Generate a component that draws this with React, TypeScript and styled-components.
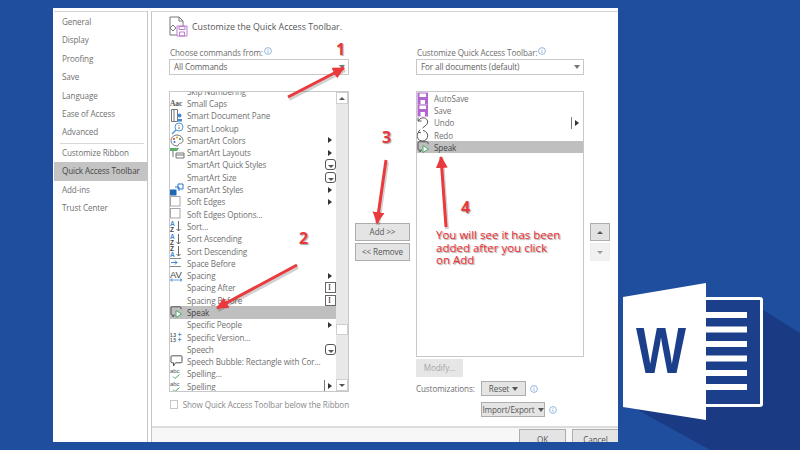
import React from 'react';
import styled, { createGlobalStyle } from 'styled-components';

const GlobalStyle = createGlobalStyle`
  html, body {
    margin: 0;
    padding: 0;
    overflow: hidden;
  }
  * {
    box-sizing: border-box;
  }
`;

type IconName =
  | 'caps' | 'docPane' | 'lookup' | 'palette' | 'layouts' | 'styles' | 'box'
  | 'az' | 'za' | 'spaceBefore' | 'av' | 'speak' | 'version' | 'bubble'
  | 'spell' | 'save' | 'undo' | 'redo';

type Trail = 'arrow' | 'split' | 'gallery' | 'field';

interface Command {
  label: string;
  icon?: IconName;
  trail?: Trail;
  selected?: boolean;
}

const NAV_TOP = ['General', 'Display', 'Proofing', 'Save', 'Language', 'Ease of Access', 'Advanced'];
const NAV_BOTTOM = ['Customize Ribbon', 'Quick Access Toolbar', 'Add-ins', 'Trust Center'];

const COMMANDS: Command[] = [
  { label: 'Skip Numbering' },
  { label: 'Small Caps', icon: 'caps' },
  { label: 'Smart Document Pane', icon: 'docPane' },
  { label: 'Smart Lookup', icon: 'lookup' },
  { label: 'SmartArt Colors', icon: 'palette', trail: 'arrow' },
  { label: 'SmartArt Layouts', icon: 'layouts', trail: 'arrow' },
  { label: 'SmartArt Quick Styles', trail: 'gallery' },
  { label: 'SmartArt Size', trail: 'gallery' },
  { label: 'SmartArt Styles', icon: 'styles', trail: 'arrow' },
  { label: 'Soft Edges', icon: 'box', trail: 'arrow' },
  { label: 'Soft Edges Options...', icon: 'box' },
  { label: 'Sort...', icon: 'az' },
  { label: 'Sort Ascending', icon: 'az' },
  { label: 'Sort Descending', icon: 'za' },
  { label: 'Space Before', icon: 'spaceBefore' },
  { label: 'Spacing', icon: 'av', trail: 'arrow' },
  { label: 'Spacing After', trail: 'field' },
  { label: 'Spacing Before', trail: 'field' },
  { label: 'Speak', icon: 'speak', selected: true },
  { label: 'Specific People', trail: 'arrow' },
  { label: 'Specific Version...', icon: 'version' },
  { label: 'Speech', trail: 'gallery' },
  { label: 'Speech Bubble: Rectangle with Cor...', icon: 'bubble' },
  { label: 'Spelling...', icon: 'spell' },
  { label: 'Spelling', icon: 'spell', trail: 'split' },
];

const TOOLBAR: Command[] = [
  { label: 'AutoSave', icon: 'save' },
  { label: 'Save', icon: 'save' },
  { label: 'Undo', icon: 'undo', trail: 'split' },
  { label: 'Redo', icon: 'redo' },
  { label: 'Speak', icon: 'speak', selected: true },
];

// annotation arrows: tail x, tail y, head x, head y
const ARROWS = [
  [288, 97, 344, 68],
  [297, 265, 217, 308],
  [386, 160, 377, 223],
  [446, 227, 441, 157],
];

function RowIcon({ name }: { name: IconName }) {
  switch (name) {
    case 'caps':
      return (
        <svg width="14" height="10" viewBox="0 0 14 10">
          <text x="0" y="8" fontFamily="Liberation Serif, serif" fontSize="7.500" fontWeight="700" fill="#555">Aac</text>
        </svg>
      );
    case 'docPane':
      return (
        <svg width="14" height="13" viewBox="0 0 14 13" fill="none">
          <path d="M1.500 .5h6v12h-6zM4 .5v12" stroke="#777" />
          <circle cx="9.500" cy="6.500" r="2" fill="#3f8ad2" />
          <path d="M8 10h4v2.500H8z" fill="#3f8ad2" />
        </svg>
      );
    case 'lookup':
      return (
        <svg width="16" height="13" viewBox="0 0 16 13" fill="none">
          <circle cx="9" cy="5" r="4" stroke="#4f97d8" />
          <path d="M6 8l-4 4" stroke="#4f97d8" strokeWidth="1.200" />
          <path d="M9 3v.8M9 5v2.200" stroke="#777" />
        </svg>
      );
    case 'palette':
      return (
        <svg width="14" height="13" viewBox="0 0 14 13" fill="none">
          <path d="M7 1a6 5.500 0 1 0 0 11c2 0 1-2 2.500-2.500S13 9 13 6.500A6 5.500 0 0 0 7 1z" stroke="#777" />
          <circle cx="4" cy="5" r="1" fill="#c0392b" />
          <circle cx="7" cy="3.500" r="1" fill="#d89a2a" />
          <circle cx="10" cy="5" r="1" fill="#3a8f4a" />
          <circle cx="4.500" cy="8" r="1" fill="#2a78c8" />
        </svg>
      );
    case 'layouts':
      return (
        <svg width="15" height="12" viewBox="0 0 15 12" fill="none">
          <path d="M0 1h9L7 4H0z" fill="#5cae6c" />
          <path d="M3 4v6" stroke="#777" />
          <path d="M6 6h8v5H6zM6 8h8" stroke="#777" />
        </svg>
      );
    case 'styles':
      return (
        <svg width="14" height="13" viewBox="0 0 14 13" fill="none">
          <path d="M8 1h5v5H8zM5 4h4v4" stroke="#2a78c8" />
          <path d="M0 6.500h6.500V12.500H0z" fill="#1f66b5" />
        </svg>
      );
    case 'box':
      return (
        <svg width="12" height="12" viewBox="0 0 12 12">
          <rect x=".5" y=".5" width="9.500" height="9.500" fill="#fff" stroke="#a8a8a8" />
        </svg>
      );
    case 'az':
    case 'za':
      return (
        <svg width="14" height="12" viewBox="0 0 14 12" fill="none">
          <text x="0" y="5.500" fontFamily="Liberation Sans, sans-serif" fontSize="6.500" fontWeight="700" fill={name === 'az' ? '#3f8ad2' : '#444'}>{name === 'az' ? 'A' : 'Z'}</text>
          <text x="0" y="11.500" fontFamily="Liberation Sans, sans-serif" fontSize="6.500" fontWeight="700" fill={name === 'az' ? '#444' : '#3f8ad2'}>{name === 'az' ? 'Z' : 'A'}</text>
          <path d="M8.500 1v10M6.500 9l2 2 2-2" stroke="#666" />
        </svg>
      );
    case 'spaceBefore':
      return (
        <svg width="14" height="12" viewBox="0 0 14 12" fill="none">
          <path d="M0 1.500h11M0 9.500h11" stroke="#888" />
          <path d="M1 5.500h6M5 3.500l2 2-2 2" stroke="#3f8ad2" />
        </svg>
      );
    case 'av':
      return (
        <svg width="14" height="13" viewBox="0 0 14 13" fill="none">
          <text x="0" y="8.500" fontFamily="Liberation Sans, sans-serif" fontSize="9.500" fill="#444">AV</text>
          <path d="M.5 11h11.500M2.500 9.500L.5 11l2 1.500M10 9.500l2 1.500-2 1.500" stroke="#3f8ad2" strokeWidth=".8" />
        </svg>
      );
    case 'speak':
      return (
        <svg width="15" height="13" viewBox="0 0 15 13" fill="none">
          <path d="M2 .8h8a1 1 0 0 1 1 1v1.500M5 9H4.300L3 11V9H2a1 1 0 0 1-1-1V1.800a1 1 0 0 1 1-1" stroke="#555" />
          <path d="M6 4.500l5.500 3.500L6 11.500z" fill="#fff" stroke="#49a865" />
        </svg>
      );
    case 'version':
      return (
        <svg width="14" height="10" viewBox="0 0 14 10">
          <text x="0" y="4.500" fontFamily="Liberation Sans, sans-serif" fontSize="4.500" fontWeight="700" fill="#555">1.3</text>
          <text x="0" y="9.500" fontFamily="Liberation Sans, sans-serif" fontSize="4.500" fontWeight="700" fill="#555">1.5</text>
          <path d="M8 2.500h3.500M9.700 .7v3.600M8 7.500h3.500M9.700 5.700v3.600" stroke="#3f8ad2" strokeWidth=".8" />
        </svg>
      );
    case 'bubble':
      return (
        <svg width="13" height="13" viewBox="0 0 13 13" fill="none">
          <path d="M2 .8h9a1 1 0 0 1 1 1v5a1 1 0 0 1-1 1H5.500L3.500 11V7.800H2a1 1 0 0 1-1-1V1.800a1 1 0 0 1 1-1z" stroke="#555" />
        </svg>
      );
    case 'spell':
      return (
        <svg width="14" height="13" viewBox="0 0 14 13" fill="none">
          <text x="0" y="5.500" fontFamily="Liberation Sans, sans-serif" fontSize="6" fill="#555">abc</text>
          <path d="M3 9.500l2 2L9.500 7.500" stroke="#49a865" />
        </svg>
      );
    case 'save':
      return (
        <svg width="12" height="13" viewBox="0 0 12 13">
          <path d="M.5 .5h10.500v12H.5z" fill="#b366cf" />
          <path d="M2.500 1.500h6.500v3.500H2.500zM3.500 8h4.500v4.500H3.500z" fill="#fff" />
        </svg>
      );
    case 'undo':
      return (
        <svg width="12" height="13" viewBox="0 0 12 13" fill="none">
          <path d="M1 1.500v3.500h3.500" stroke="#555" />
          <path d="M1.300 5C3 2.300 5 1.500 7.500 2c3.500 1 4 4.800 1.800 7L5.500 12" stroke="#555" />
        </svg>
      );
    case 'redo':
      return (
        <svg width="12" height="13" viewBox="0 0 12 13" fill="none">
          <path d="M3 .8L1.200 3.200l2.800 .6" stroke="#555" />
          <path d="M1.500 3.200A5.300 5.300 0 1 0 6 1.500" stroke="#555" />
        </svg>
      );
    default:
      return null;
  }
}

function InfoMark() {
  return (
    <InfoSvg width="8" height="8" viewBox="0 0 8 8" fill="none">
      <circle cx="4" cy="4" r="3.400" stroke="#7aa7d8" strokeWidth=".8" />
      <path d="M4 3.300v2.700M4 1.900v.7" stroke="#7aa7d8" strokeWidth=".8" />
    </InfoSvg>
  );
}

function CommandRow({ item }: { item: Command }) {
  return (
    <Row $selected={item.selected}>
      <IconSlot>{item.icon && <RowIcon name={item.icon} />}</IconSlot>
      <RowLabel>{item.label}</RowLabel>
      {item.trail === 'arrow' && <TrailArrow />}
      {item.trail === 'split' && <SplitBar><TrailArrow /></SplitBar>}
      {item.trail === 'gallery' && <GalleryMark><DownTick /></GalleryMark>}
      {item.trail === 'field' && <FieldMark>I</FieldMark>}
    </Row>
  );
}

function WordLogo() {
  return (
    <LogoSvg width="177" height="167" viewBox="623 283 177 167">
      <path d="M763 310L800 333V450H710L638 410z" fill="#1a3b84" />
      <rect x="700" y="297" width="63" height="110" rx="3" fill="#fff" />
      <rect x="706" y="300" width="54" height="104" fill="#1b3f8b" />
      {[312, 326.500, 341, 355.500, 370, 384].map((y) => (
        <rect key={y} x="706" y={y} width="41" height="6" fill="#fff" />
      ))}
      <path d="M623 297L706 283V420L623 407z" fill="#fff" />
      <text
        x="661"
        y="373"
        textAnchor="middle"
        fontFamily="Liberation Sans, sans-serif"
        fontSize="64"
        fontWeight="700"
        fill="#1b3f8b"
        textLength="50"
        lengthAdjust="spacingAndGlyphs"
      >
        W
      </text>
    </LogoSvg>
  );
}

function Annotations() {
  return (
    <ArrowLayer width="800" height="450" viewBox="0 0 800 450">
      <defs>
        <marker id="head" markerUnits="userSpaceOnUse" markerWidth="14" markerHeight="14" refX="11" refY="6" orient="auto">
          <path d="M0 0L12 6L0 12z" fill="#ea3a3d" />
        </marker>
      </defs>
      {ARROWS.map(([x1, y1, x2, y2]) => (
        <g key={`${x1}-${y1}`}>
          <line x1={x1 + 1} y1={y1 + 2} x2={x2 + 1} y2={y2 + 2} stroke="#000" strokeOpacity=".18" strokeWidth="4" />
          <line x1={x1} y1={y1} x2={x2} y2={y2} stroke="#ea3a3d" strokeWidth="3" markerEnd="url(#head)" />
        </g>
      ))}
    </ArrowLayer>
  );
}

export default function App() {
  return (
    <>
      <GlobalStyle />
      <Stage>
        <Dialog>
          <Nav>
            {NAV_TOP.map((name) => (
              <NavItem key={name}>{name}</NavItem>
            ))}
            <NavRule />
            {NAV_BOTTOM.map((name) => (
              <NavItem key={name} $active={name === 'Quick Access Toolbar'}>{name}</NavItem>
            ))}
          </Nav>
          <Panel>
            <Header>
              <svg width="19" height="21" viewBox="0 0 19 21" fill="none">
                <path d="M1 1h9l4 4v14H1z" fill="#fff" stroke="#777" />
                <path d="M10 1v4h4" stroke="#777" />
                <path d="M4 9l-3 3 3 3 3-3z" fill="#fff" stroke="#777" />
                <path d="M8 10h10v10H8z" fill="#fff" stroke="#bd7ccf" />
                <path d="M10 10.500h6v3h-6zM10.500 16h5v4h-5z" stroke="#bd7ccf" />
              </svg>
              <Title>Customize the Quick Access Toolbar.</Title>
            </Header>
            <Columns>
              <CommandsColumn>
                <FieldLabel>Choose commands from:<InfoMark /></FieldLabel>
                <Select>All Commands<Caret /></Select>
                <ListBox $height={301}>
                  <ScrollRows>
                    {COMMANDS.map((item, i) => (
                      <CommandRow key={`${item.label}-${i}`} item={item} />
                    ))}
                  </ScrollRows>
                  <ScrollTrack>
                    <ScrollButton><UpTick /></ScrollButton>
                    <ScrollThumb />
                    <ScrollButton><DownTick /></ScrollButton>
                  </ScrollTrack>
                </ListBox>
                <CheckLine>
                  <CheckBox />
                  Show Quick Access Toolbar below the Ribbon
                </CheckLine>
              </CommandsColumn>

              <MiddleColumn>
                <PlainButton>Add &gt;&gt;</PlainButton>
                <PlainButton>&lt;&lt; Remove</PlainButton>
              </MiddleColumn>

              <ToolbarColumn>
                <FieldLabel>Customize Quick Access Toolbar:<InfoMark /></FieldLabel>
                <Select>For all documents (default)<Caret /></Select>
                <ListBox $height={266}>
                  <ToolbarRows>
                    {TOOLBAR.map((item) => (
                      <CommandRow key={item.label + item.icon} item={item} />
                    ))}
                  </ToolbarRows>
                </ListBox>
                <ModifyButton>Modify...</ModifyButton>
                <CustomGrid>
                  <span>Customizations:</span>
                  <ButtonLine>
                    <MenuButton $width={45}>Reset<Caret /></MenuButton>
                    <InfoMark />
                  </ButtonLine>
                  <span />
                  <ButtonLine>
                    <MenuButton $width={64}>Import/Export<Caret /></MenuButton>
                    <InfoMark />
                  </ButtonLine>
                </CustomGrid>
              </ToolbarColumn>

              <SideColumn>
                <SideButton><UpTick /></SideButton>
                <SideButton $disabled><DownTick /></SideButton>
              </SideColumn>
            </Columns>
            <Footer>
              <FooterButton>OK</FooterButton>
              <FooterButton>Cancel</FooterButton>
            </Footer>
          </Panel>
        </Dialog>
        <WordLogo />
        <Annotations />
        <Num $x={336} $y={38}>1</Num>
        <Num $x={299} $y={227}>2</Num>
        <Num $x={382} $y={126}>3</Num>
        <Num $x={461} $y={196}>4</Num>
        <Note>You will see it has been<br />added after you click<br />on Add</Note>
      </Stage>
    </>
  );
}

const uiFont = `'Open Sans', 'Liberation Sans', sans-serif`;

const Stage = styled.div`
  position: relative;
  width: 800px;
  height: 450px;
  overflow: hidden;
  background: #1f4e9e;
  padding: 8px 0 0 53px;
  font-family: ${uiFont};
`;

const Dialog = styled.div`
  display: flex;
  width: 565px;
  height: 434px;
  overflow: hidden;
  background: #fff;
  padding-top: 3px;
  color: #6e6e6e;
  font-size: 8.100px;
  letter-spacing: -0.1px;
`;

const Nav = styled.nav`
  flex: none;
  width: 94px;
  margin-left: 1px;
  border-right: 1px solid #c6c6c6;
  border-top: 1px solid #d6d6d6;
  padding-top: 1px;
`;

const NavItem = styled.div<{ $active?: boolean }>`
  height: 18.400px;
  line-height: 18.400px;
  padding-left: 8px;
  margin-right: -1px;
  white-space: nowrap;
  background: ${({ $active }) => ($active ? '#c4c4c4' : 'transparent')};
  color: ${({ $active }) => ($active ? '#444' : '#707070')};
`;

const NavRule = styled.div`
  height: 1px;
  margin: 1px 3px 0 6px;
  background: #d8d8d8;
`;

const Panel = styled.main`
  flex: none;
  width: 467px;
  margin-left: 3px;
  border-left: 1px solid #c6c6c6;
  border-top: 1px solid #d6d6d6;
  display: flex;
  flex-direction: column;
`;

const Header = styled.header`
  height: 34px;
  padding: 4px 0 0 17px;
  display: flex;
  align-items: flex-start;
  gap: 4px;
`;

const Title = styled.h1`
  margin: 5px 0 0;
  font-size: 8.800px;
  line-height: 13px;
  font-weight: 400;
  letter-spacing: 0;
  color: #555;
  white-space: nowrap;
`;

const Columns = styled.div`
  display: flex;
  padding-left: 17px;
  height: 380px;
`;

const CommandsColumn = styled.section`
  width: 180px;
  display: flex;
  flex-direction: column;
`;

const ToolbarColumn = styled.section`
  width: 168px;
  margin-left: 6px;
  display: flex;
  flex-direction: column;
`;

const FieldLabel = styled.div`
  height: 13px;
  line-height: 13px;
  padding-left: 1px;
  white-space: nowrap;
`;

const InfoSvg = styled.svg`
  margin-left: 1px;
  vertical-align: 1px;
`;

const Select = styled.div`
  position: relative;
  height: 16px;
  line-height: 14px;
  padding-left: 4px;
  border: 1px solid #c8c8c8;
  color: #5e5e5e;
  margin-bottom: 16px;
`;

const Caret = styled.span`
  display: inline-block;
  width: 0;
  height: 0;
  border-left: 3px solid transparent;
  border-right: 3px solid transparent;
  border-top: 4px solid #555;
  ${Select} & {
    position: absolute;
    right: 3px;
    top: 5px;
    border-top-color: #777;
  }
`;

const ListBox = styled.div<{ $height: number }>`
  flex: none;
  height: ${({ $height }) => $height}px;
  display: flex;
  overflow: hidden;
  border: 1px solid #c8c8c8;
`;

const ScrollRows = styled.div`
  flex: 1;
  min-width: 0;
  margin-top: -7px;
`;

const ToolbarRows = styled.div`
  flex: 1;
  min-width: 0;
`;

const Row = styled.div<{ $selected?: boolean }>`
  display: flex;
  align-items: center;
  height: 12.300px;
  background: ${({ $selected }) => ($selected ? '#bfbfbf' : 'transparent')};
  color: ${({ $selected }) => ($selected ? '#444' : '#707070')};
  white-space: nowrap;
`;

const IconSlot = styled.span`
  flex: none;
  width: 17px;
  height: 12px;
  display: flex;
  align-items: center;
  justify-content: flex-start;
  overflow: visible;
`;

const RowLabel = styled.span`
  flex: 1;
`;

const TrailArrow = styled.span`
  width: 0;
  height: 0;
  margin-right: 4px;
  border-top: 3px solid transparent;
  border-bottom: 3px solid transparent;
  border-left: 4px solid #333;
`;

const SplitBar = styled.span`
  height: 12px;
  padding-left: 3px;
  border-left: 1px solid #777;
  display: flex;
  align-items: center;
`;

const GalleryMark = styled.span`
  width: 11px;
  height: 11px;
  border: 1px solid #555;
  border-radius: 3px;
  display: flex;
  align-items: flex-end;
  justify-content: center;
  padding-bottom: 1px;
`;

const FieldMark = styled.span`
  width: 11px;
  height: 11px;
  border: 1px solid #666;
  font: 9px/9px 'Liberation Serif', serif;
  color: #333;
  padding-left: 2px;
`;

const UpTick = styled.span`
  width: 0;
  height: 0;
  border-left: 3px solid transparent;
  border-right: 3px solid transparent;
  border-bottom: 3px solid #555;
`;

const DownTick = styled.span`
  width: 0;
  height: 0;
  border-left: 3px solid transparent;
  border-right: 3px solid transparent;
  border-top: 3px solid #555;
`;

const ScrollTrack = styled.div`
  flex: none;
  width: 12px;
  display: flex;
  flex-direction: column;
  background: #e8e8e8;
`;

const ScrollButton = styled.div`
  flex: none;
  height: 12px;
  background: #fff;
  border: 1px solid #cfcfcf;
  display: flex;
  align-items: center;
  justify-content: center;
`;

const ScrollThumb = styled.div`
  height: 11px;
  margin-top: auto;
  margin-bottom: 44px;
  background: #fff;
  border: 1px solid #cfcfcf;
`;

const CheckLine = styled.label`
  display: flex;
  align-items: center;
  gap: 5px;
  margin-top: 7px;
  padding-left: 1px;
  white-space: nowrap;
  color: #8a8a8a;
`;

const CheckBox = styled.span`
  width: 9px;
  height: 9px;
  border: 1px solid #c8c8c8;
  background: #fff;
`;

const MiddleColumn = styled.div`
  width: 55px;
  margin-left: 6px;
  padding-top: 177px;
  display: flex;
  flex-direction: column;
  gap: 2px;
`;

const PlainButton = styled.div`
  height: 18px;
  line-height: 16px;
  text-align: center;
  background: #e4e4e4;
  border: 1px solid #adadad;
  color: #555;
`;

const ModifyButton = styled.div`
  width: 47px;
  height: 18px;
  line-height: 18px;
  margin-top: 2px;
  text-align: center;
  background: #e6e6e6;
  color: #a6a6a6;
`;

const CustomGrid = styled.div`
  margin-top: 4px;
  display: grid;
  grid-template-columns: 65px 1fr;
  grid-template-rows: 15px 15px;
  row-gap: 6px;
  align-items: center;
`;

const ButtonLine = styled.div`
  display: flex;
  align-items: center;
  gap: 3px;
`;

const MenuButton = styled.div<{ $width: number }>`
  width: ${({ $width }) => $width}px;
  height: 15px;
  background: #e4e4e4;
  border: 1px solid #adadad;
  color: #555;
  display: flex;
  align-items: center;
  justify-content: center;
  gap: 3px;
  white-space: nowrap;
`;

const SideColumn = styled.div`
  width: 20px;
  margin-left: 6px;
  padding-top: 177px;
  display: flex;
  flex-direction: column;
  gap: 2px;
`;

const SideButton = styled.div<{ $disabled?: boolean }>`
  height: 18px;
  display: flex;
  align-items: center;
  justify-content: center;
  background: ${({ $disabled }) => ($disabled ? '#e8e8e8' : '#e2e2e2')};
  border: 1px solid ${({ $disabled }) => ($disabled ? '#e4e4e4' : '#adadad')};
  opacity: ${({ $disabled }) => ($disabled ? 0.6 : 1)};
`;

const Footer = styled.footer`
  flex: none;
  height: 16px;
  margin-right: -1px;
  border-top: 2px solid #dcdcdc;
  background: #f7f7f7;
  padding-top: 1px;
  display: flex;
  justify-content: flex-end;
  gap: 6px;
`;

const FooterButton = styled.div`
  width: 47px;
  height: 20px;
  background: #e4e4e4;
  border: 1px solid #adadad;
  text-align: center;
  line-height: 19px;
  color: #555;
`;

const LogoSvg = styled.svg`
  position: absolute;
  left: 623px;
  top: 283px;
`;

const ArrowLayer = styled.svg`
  position: absolute;
  left: 0;
  top: 0;
  pointer-events: none;
`;

const Num = styled.div<{ $x: number; $y: number }>`
  position: absolute;
  left: ${({ $x }) => $x}px;
  top: ${({ $y }) => $y}px;
  font: 700 16px/22px 'Open Sans', sans-serif;
  color: #e8383b;
  text-shadow: 1px 1px 1px rgba(0, 0, 0, 0.35);
`;

const Note = styled.div`
  position: absolute;
  left: 436px;
  top: 229px;
  font: 400 11.500px/12.500px 'Open Sans', sans-serif;
  color: #ee2f33;
  white-space: nowrap;
  text-shadow: 1px 1px 1px rgba(0, 0, 0, 0.4);
`;
